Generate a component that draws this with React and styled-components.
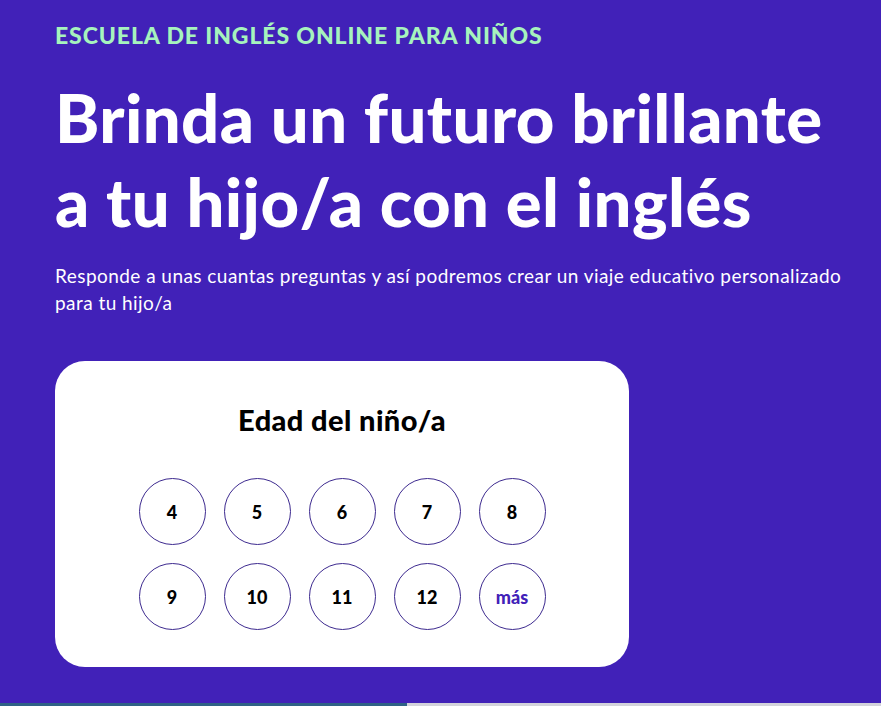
import React from 'react';
import styled, { createGlobalStyle } from 'styled-components';

const GlobalStyle = createGlobalStyle`
    html, body {
        margin: 0;
        padding: 0;
        background: #4121b8;
    }
    body {
        font-family: 'Lato', 'Noto Sans', sans-serif;
    }
`;

const AGES = ['4', '5', '6', '7', '8', '9', '10', '11', '12', 'más'];

const App = () => (
    <>
        <GlobalStyle />
        <Page>
            <Hero>
                <Eyebrow>Escuela de inglés online para niños</Eyebrow>
                <Title>
                    Brinda un futuro brillante
                    <br />a tu hijo/a con el inglés
                </Title>
                <Lead>
                    Responde a unas cuantas preguntas y así podremos crear un viaje educativo
                    personalizado para tu hijo/a
                </Lead>
                <QuizCard>
                    <CardTitle>Edad del niño/a</CardTitle>
                    <AgeGrid>
                        {AGES.map((age) => (
                            <AgeButton key={age} $accent={age === 'más'}>
                                {age}
                            </AgeButton>
                        ))}
                    </AgeGrid>
                </QuizCard>
            </Hero>
            <Progress>
                <ProgressFill style={{ width: `${(407 / 881) * 100}%` }} />
            </Progress>
        </Page>
    </>
);

export default App;

// --- STYLED COMPONENTS ---

const Page = styled.div`
    height: 706px;
    display: flex;
    flex-direction: column;
    background: #4121b8;
    overflow: hidden;
`;

const Hero = styled.main`
    flex: 1;
    padding: 21px 20px 0 55px;
`;

const Eyebrow = styled.p`
    margin: 0;
    font-size: 23px;
    line-height: 28px;
    font-weight: 900;
    text-transform: uppercase;
    color: #a6f3bd;
    letter-spacing: 0.9px;
`;

const Title = styled.h1`
    margin: 26px 0 0;
    font-size: 67px;
    line-height: 84px;
    font-weight: 900;
    color: #ffffff;
    letter-spacing: 0.4px;
    white-space: nowrap;
`;

const Lead = styled.p`
    margin: 19px 0 0;
    max-width: 806px;
    font-size: 19px;
    line-height: 27px;
    font-weight: 400;
    color: #ffffff;
    letter-spacing: 0.45px;
`;

const QuizCard = styled.section`
    margin-top: 45px;
    width: 574px;
    height: 306px;
    box-sizing: border-box;
    padding: 41px 0 0;
    background: #ffffff;
    border-radius: 30px;
    display: flex;
    flex-direction: column;
    align-items: center;
`;

const CardTitle = styled.h2`
    margin: 0;
    font-size: 29px;
    line-height: 36px;
    font-weight: 900;
    color: #000000;
    letter-spacing: 0.4px;
`;

const AgeGrid = styled.div`
    margin-top: 40px;
    display: grid;
    grid-template-columns: repeat(5, 67px);
    grid-auto-rows: 67px;
    gap: 18px;
`;

const AgeButton = styled.button`
    width: 67px;
    height: 67px;
    padding: 0;
    border-radius: 50%;
    border: 1px solid #3d2a8f;
    background: #ffffff;
    font-family: inherit;
    font-size: 18px;
    font-weight: 900;
    color: ${({ $accent }) => ($accent ? '#4121b8' : '#000000')};
    cursor: pointer;
`;

const Progress = styled.div`
    flex: none;
    height: 3px;
    background: #d3d3db;
`;

const ProgressFill = styled.div`
    height: 100%;
    background: #2e6186;
`;
